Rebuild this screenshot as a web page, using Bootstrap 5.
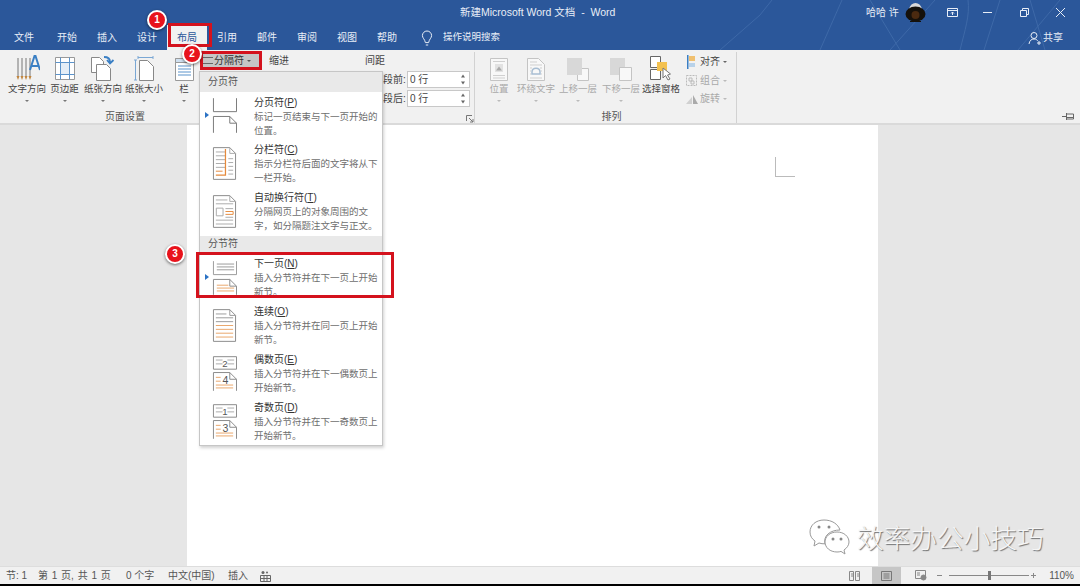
<!DOCTYPE html>
<html>
<head>
    <meta charset="utf-8">
    <title>新建Microsoft Word 文档 - Word</title>
    <link href="https://cdn.jsdelivr.net/npm/bootstrap@5.3.0/dist/css/bootstrap.min.css" rel="stylesheet">
    <style>
        html, body { height: 586px; overflow: hidden; }
        body { font-family: "Liberation Sans", "Noto Sans CJK SC", sans-serif; font-size: 10px; color: #444; background: #000; }
        .app { width: 1080px; height: 584px; position: relative; overflow: hidden; background: #e6e6e6; }

        /* title bar + tabs */
        .word-head { background: #2b579a; height: 50px; color: #e8eef7; position: relative; }
        .head-lines { position: absolute; left: 700px; top: 0; }
        .title-row { height: 25px; line-height: 25px; position: relative; }
        .doc-title { margin-left: 460px; width: 406px; font-size: 10.5px; flex: none; }
        .user-name { width: 39px; flex: none; }
        .avatar { margin-right: 21px; flex: none; }
        .win-btn { margin-right: 25px; flex: none; }
        .tab-row { height: 25px; position: relative; }
        .tab-link { width: 40px; height: 25px; padding: 0; text-align: center; line-height: 26px; color: #e8eef7; font-size: 10px; }
        .tab-link.first { width: 46px; margin-left: 1px; }
        .tab-link.on, .tab-link.on:hover { background: #f1f1f1; color: #2b579a; }
        .tell-me { margin-left: 14px; gap: 10px; font-size: 9.5px; }
        .share { margin-left: auto; margin-right: 17px; gap: 2px; }

        /* ribbon */
        .ribbon { height: 75px; background: #f1f1f1; border-bottom: 2px solid #dadada; position: relative; }
        .rib-group { position: relative; height: 71px; margin-top: 2px; border-right: 1px solid #d2d2d2; }
        .group-one { width: 475px; }
        .group-two { width: 262px; padding-left: 12px; }
        .rib-tools { height: 58px; }
        .rib-label { line-height: 14px; text-align: center; color: #555; }
        .group-one .rib-label { width: 250px; }
        .big-btn { display: flex; flex-direction: column; align-items: center; flex: none; font-size: 9.5px; line-height: 13px; color: #444; white-space: nowrap; }
        .big-btn svg { display: block; margin: 3px 0 1px; }
        .big-btn i { display: block; width: 0; height: 0; margin-top: 5px; border: 2px solid transparent; border-top-color: #777; }
        .big-btn.off { color: #a9a9a9; }
        .big-btn.off i { border-top-color: #bbb; }
        .w-text { width: 38px; margin-left: 0; }
        .w-margin { width: 37px; }
        .w-orient { width: 40px; }
        .w-size { width: 42px; }
        .w-cols { width: 20px; margin-left: 9px; }
        .w-pos { width: 24px; }
        .w-wrap { width: 50px; }
        .w-up { width: 34px; }
        .w-down { width: 52px; }
        .w-pane { width: 28px; }
        .break-btn { width: 59px; height: 15px; margin: 1px 0 0 7px; padding-left: 2px; gap: 1px; background: #c6c6c6; line-height: 15px; color: #333; flex: none; }
        .break-btn i { display: inline-block; width: 0; height: 0; margin: 7px 0 0 2px; border: 2px solid transparent; border-top-color: #555; }
        .para-head { line-height: 14px; margin-top: 2px; color: #444; }
        .indent-col { margin-left: 9px; width: 20px; flex: none; }
        .spacing-col { margin-left: 76px; width: 105px; flex: none; }
        .spin-row { height: 17px; margin-bottom: 2px; }
        .spin-row.top-row { margin-top: 3px; }
        .para-name { width: 42px; padding-left: 18px; line-height: 14px; white-space: nowrap; }
        .spin { flex: 1; position: relative; height: 17px; background: #fff; border: 1px solid #c8c8c8; line-height: 15px; padding-left: 2px; color: #444; }
        .spin svg { position: absolute; right: 3px; top: 1px; }
        .launcher { position: absolute; left: 466px; top: 63px; }
        .side-btns { margin-left: 10px; gap: 4.5px; line-height: 14px; padding-top: 3px; }
        .side-btns > div { height: 14px; gap: 2px; white-space: nowrap; }
        .side-btns .off { color: #a9a9a9; }
        .side-btns i { display: inline-block; margin: 2px 0 0 1px; border: 2px solid transparent; border-top-color: #666; }
        .side-btns .off i { border-top-color: #bbb; }
        .pin { position: absolute; left: 1062px; top: 62px; }

        /* document */
        .doc-area { height: 441px; padding-left: 187px; padding-right: 202px; }
        .doc-page { width: 691px; height: 441px; background: #fff; position: relative; }
        .margin-mark { position: absolute; left: 588px; top: 32px; width: 20px; height: 20px; border-left: 1px solid #bbb; border-bottom: 1px solid #bbb; }

        /* status bar */
        .status-bar { height: 18px; background: #f1f1f1; border-top: 1px solid #ddd; line-height: 17px; color: #555; white-space: nowrap; }
        .st-sec { margin-left: 6px; width: 32px; }
        .st-page { width: 88px; word-spacing: 1px; }
        .st-words { width: 42px; }
        .st-lang { width: 60px; }
        .st-ins { width: 32px; }
        .st-view { width: 29px; height: 17px; }
        .st-view.on { background: #c6c6c6; }
        .st-view.read { padding-right: 6px; }
        .st-view.web { margin-left: 5px; }
        .st-zoom { margin-left: 2px; }
        .st-pct { margin: 0 6px 0 12px; }

        /* dropdown */
        .break-menu { position: absolute; left: 199px; top: 71px; width: 184px; height: 375px; background: #fff; border: 1px solid #c6c6c6; box-shadow: 1px 2px 3px rgba(0,0,0,.18); border-radius: 0; z-index: 5; }
        .menu-head { flex: none; height: 20px; line-height: 20px; background: #e9e9e9; padding: 0 0 0 8px; border: 0; color: #555; border-radius: 0; }
        .menu-head.next { height: 18px; line-height: 15px; }
        .menu-row { flex: none; height: 48px; padding: 2px 0 0 0; border: 0; border-radius: 0; background: transparent; color: #6e6e6e; font-size: 9.5px; }
        .menu-ico { width: 54px; flex: none; position: relative; padding: 4px 0 0 12px; }
        .menu-ico svg { display: block; }
        .menu-ico b { position: absolute; left: 5px; top: 18px; width: 0; height: 0; border: 3px solid transparent; border-left: 4px solid #2b72c4; border-right: 0; }
        .menu-txt { line-height: 14px; }
        .menu-txt strong { display: block; font-size: 10px; font-weight: 400; color: #333; line-height: 15px; }
        .menu-row.first-row .menu-txt { padding-top: 1px; }
        .menu-txt u { text-underline-offset: 1px; }

        /* red annotations */
        .mark-box { position: absolute; border: 3px solid #d4121d; z-index: 7; }
        .box-tab { left: 168px; top: 23px; width: 44px; height: 24px; }
        .box-break { left: 200px; top: 51px; width: 62px; height: 19px; }
        .box-next { left: 196px; top: 252px; width: 198px; height: 46px; }
        .step-dot { position: absolute; width: 20px; height: 20px; border-radius: 50%; background: #e8131c; border: 2px solid #fff; box-shadow: 0 1px 3px rgba(0,0,0,.55); color: #fff; font: 700 10px/16px "Liberation Sans", sans-serif; text-align: center; z-index: 8; }
        .dot-one { left: 147px; top: 10px; }
        .dot-two { left: 182px; top: 44px; }
        .dot-three { left: 165px; top: 244px; }

        /* watermark */
        .water { position: absolute; left: 808px; top: 518px; z-index: 9; gap: 5px; }
        .water-txt { font-family: "Noto Sans CJK SC", sans-serif; font-size: 26.7px; font-weight: 300; line-height: 36px; color: #f6f6f6; text-shadow: 1px 1px 1px #6f6f6f; white-space: nowrap; }
    </style>
</head>
<body>
<div class="app">
    <header class="word-head">
        <svg class="head-lines" width="380" height="50" fill="none" stroke="#3e69a8" stroke-width="1">
            <path d="M20 50L60 15 72 0M120 50l22-50M170 0l30 50M190 50l45-50M260 50c5-20 10-35 8-50M300 0l-16 50M318 50L360 0M345 50l-15-50"/>
        </svg>
        <div class="title-row d-flex align-items-center">
            <div class="doc-title">新建Microsoft Word 文档 &nbsp;-&nbsp; Word</div>
            <div class="user-name">哈哈 许</div>
            <svg class="avatar" width="21" height="21" viewBox="0 0 21 21"><path d="M4 7c1-4 3.500-6 6.500-6s5.500 2 6.500 6z" fill="#d9d9d9"/><ellipse cx="10.500" cy="12" rx="10" ry="7.500" fill="#15110b"/><circle cx="10.500" cy="13" r="4" fill="#4a2a10"/><path d="M5 19.500h11" stroke="#15110b"/></svg>
            <svg class="win-btn" width="11" height="11" fill="none" stroke="#e8eef7"><path d="M.5 1.500h10v8H.5zM.5 3.500h10M5.500 8V5M4 6.500l1.500-1.500L7 6.500"/></svg>
            <svg class="win-btn" width="11" height="11" fill="none" stroke="#e8eef7"><path d="M0 5.500h9"/></svg>
            <svg class="win-btn" width="11" height="11" fill="none" stroke="#e8eef7"><path d="M1.500 3.500h6v6h-6zM3.500 3.500v-2h6v6h-2"/></svg>
            <svg class="win-btn" width="11" height="11" fill="none" stroke="#e8eef7"><path d="M1 1l9 9M10 1l-9 9"/></svg>
        </div>
        <div class="tab-row d-flex align-items-center">
            <nav class="nav flex-nowrap">
                <a class="nav-link tab-link first" href="#">文件</a>
                <a class="nav-link tab-link" href="#">开始</a>
                <a class="nav-link tab-link" href="#">插入</a>
                <a class="nav-link tab-link" href="#">设计</a>
                <a class="nav-link tab-link on" href="#">布局</a>
                <a class="nav-link tab-link" href="#">引用</a>
                <a class="nav-link tab-link" href="#">邮件</a>
                <a class="nav-link tab-link" href="#">审阅</a>
                <a class="nav-link tab-link" href="#">视图</a>
                <a class="nav-link tab-link" href="#">帮助</a>
            </nav>
            <div class="tell-me d-flex align-items-center">
                <svg width="12" height="16" fill="none" stroke="#e8eef7"><path d="M6 1a4.600 4.600 0 0 0-4.600 4.600c0 2.400 2.400 3.600 3 7h3.200c.6-3.400 3-4.600 3-7A4.600 4.600 0 0 0 6 1zM4.800 15h2.400"/></svg>
                <span>操作说明搜索</span>
            </div>
            <div class="share d-flex align-items-center">
                <svg width="13" height="14" fill="none" stroke="#e8eef7"><circle cx="6" cy="4.500" r="3"/><path d="M1 13c.5-3.500 2.500-5 5-5s3 .8 3.600 2M9 12h4M11 10v4"/></svg>
                <span>共享</span>
            </div>
        </div>
    </header>

    <section class="ribbon d-flex">
        <div class="rib-group group-one">
            <div class="rib-tools d-flex ps-2">
                <div class="big-btn w-text">
                    <svg width="26" height="26" viewBox="0 0 26 26" fill="none"><path d="M4 3v19M8 3v19M12 3v19M16 3v19" stroke="#777"/><path d="M2.500 21L4 25l1.500-4M6.500 21L8 25l1.500-4M10.500 21l1.500 4 1.500-4M14.500 21l1.500 4 1.500-4" fill="#c0853f"/><path d="M16 15l4.500-14h1L26 15M17.500 11h7" stroke="#3a7fc4" stroke-width="2"/></svg>
                    文字方向<i></i>
                </div>
                <div class="big-btn w-margin">
                    <svg width="20" height="26" viewBox="0 0 20 26" fill="none"><path d="M.5 2.500h19v22H.5z" stroke="#999" fill="#fff"/><path d="M5.500 2.500v22M14.500 2.500v22M.5 7.500h19M.5 19.500h19" stroke="#5b93cb"/><path d="M6 8h8v11H6z" fill="#e4edf6"/></svg>
                    页边距<i></i>
                </div>
                <div class="big-btn w-orient">
                    <svg width="24" height="26" viewBox="0 0 24 26" fill="none"><path d="M.5 2.500h8l4 4v11H.5z" stroke="#888" fill="#fff"/><path d="M5.500 9.500h10l4 4v12h-14z" stroke="#888" fill="#fff"/><path d="M13 2c3.500 0 6 1.500 6 5M16 5l3 3.500L22.500 5" stroke="#3a7fc4" stroke-width="1.800"/></svg>
                    纸张方向<i></i>
                </div>
                <div class="big-btn w-size">
                    <svg width="20" height="26" viewBox="0 0 20 26" fill="none"><path d="M5.500 5.500h8l6 6v14h-14z" stroke="#888" fill="#fff"/><path d="M1.500 5v20M0 5h3M0 25h3M4 2.500h15M4 1v3M19 1v3" stroke="#7aa7d4"/></svg>
                    纸张大小<i></i>
                </div>
                <div class="big-btn w-cols">
                    <svg width="19" height="26" viewBox="0 0 19 26" fill="none"><path d="M.5 3.500h18v22H.5z" stroke="#999" fill="#fff"/><path d="M.5 3.500h18v4H.5z" fill="#cfe0f0" stroke="#999"/><path d="M3 11h13M3 14h13M3 17h13M3 20h13" stroke="#5b93cb"/></svg>
                    栏<i></i>
                </div>
                <div class="break-btn d-flex"><svg width="10" height="15" fill="none" stroke="#666"><path d="M0 4.500h10M0 10.500h10"/></svg><span>分隔符</span><i></i></div>
                <div class="para-head indent-col">缩进</div>
                <div class="spacing-col">
                    <div class="para-head">间距</div>
                    <div class="spin-row top-row d-flex align-items-center">
                        <div class="para-name">段前:</div>
                        <div class="spin">0 行<svg width="6" height="13"><path d="M3 1.500L1 4.500h4zM3 11.500L1 8.500h4z" fill="#666"/></svg></div>
                    </div>
                    <div class="spin-row d-flex align-items-center">
                        <div class="para-name">段后:</div>
                        <div class="spin">0 行<svg width="6" height="13"><path d="M3 1.500L1 4.500h4zM3 11.500L1 8.500h4z" fill="#666"/></svg></div>
                    </div>
                </div>
            </div>
            <div class="rib-label">页面设置</div>
            <svg class="launcher" width="8" height="8" fill="none" stroke="#777"><path d="M.5 6V.5H6M3 3l4 4M7 4v3H4"/></svg>
        </div>
        <div class="rib-group group-two">
            <div class="rib-tools d-flex">
                <div class="big-btn off w-pos">
                    <svg width="18" height="26" viewBox="0 0 18 26" fill="none"><path d="M.5 3.500h17v22H.5z" stroke="#c4c4c4" fill="#f8f8f8"/><path d="M3 6.500h12M3 23h12M3 20.500h12" stroke="#d0d0d0"/><path d="M5 9h8v8H5z" fill="#e2e2e2"/><path d="M6 15.500l3-4 3 4z" fill="#aaa"/></svg>
                    位置<i></i>
                </div>
                <div class="big-btn off w-wrap">
                    <svg width="18" height="26" viewBox="0 0 18 26" fill="none"><path d="M.5 3.500h11l6 6v16H.5z" stroke="#c4c4c4" fill="#f8f8f8"/><path d="M3 7h7M3 10h12M3 13h2M13 13h2M3 16h1M14 16h1M3 19h1M14 19h1M3 23h12" stroke="#cfcfcf"/><path d="M5 19v-2c0-5 8-5 8 0v2z" stroke="#a8bdd2" stroke-width="1.500"/></svg>
                    环绕文字<i></i>
                </div>
                <div class="big-btn off w-up">
                    <svg width="22" height="26" viewBox="0 0 22 26" fill="none"><path d="M10.500 13.500h11v12h-11z" stroke="#c4c4c4" fill="#f8f8f8"/><path d="M0 3h15v17H0z" fill="#d8d8d8"/></svg>
                    上移一层<i></i>
                </div>
                <div class="big-btn off w-down">
                    <svg width="22" height="26" viewBox="0 0 22 26" fill="none"><path d="M0 3h15v17H0z" fill="#d8d8d8"/><path d="M9.500 12.500h12v13h-12z" stroke="#c4c4c4" fill="#f8f8f8"/></svg>
                    下移一层<i></i>
                </div>
                <div class="big-btn w-pane">
                    <svg width="24" height="26" viewBox="0 0 24 26" fill="none"><path d="M1.500 1.500h10v11h-10zM1.500 14.500h10v10h-10z" stroke="#666" fill="#fff"/><path d="M8 7h10v9H8z" fill="#f3c14f"/><path d="M14 13l0 10 2.500-2.500 2.500 4.500 2-1-2.500-4 3-1z" fill="#fff" stroke="#777"/></svg>
                    选择窗格
                </div>
                <div class="side-btns d-flex flex-column">
                    <div class="d-flex align-items-center"><svg width="13" height="14"><path d="M2 0h1.500v14H2z" fill="#3a7fc4"/><path d="M4 1h6v5H4z" fill="#f0c070"/><path d="M4 8h6v4H4z" fill="#b8d2ea"/></svg>对齐<i></i></div>
                    <div class="d-flex align-items-center off"><svg width="13" height="14" fill="none" stroke="#bbb"><path d="M1.500 1.500h10v10h-10z" stroke-dasharray="2 1"/><path d="M4 4h3v3H4zM6 7h3v3H6z"/></svg>组合<i></i></div>
                    <div class="d-flex align-items-center off"><svg width="13" height="14"><path d="M1 12l6-7v7z" fill="#d0d0d0"/><path d="M8 12V3l5 9z" fill="#aaa"/></svg>旋转<i></i></div>
                </div>
            </div>
            <div class="rib-label">排列</div>
        </div>
        <svg class="pin" width="13" height="9" fill="none" stroke="#666"><path d="M0 4.500h4M4.500 1v7M4.500 2h7v5h-7M4.500 5.500h7"/></svg>
    </section>

    <main class="doc-area d-flex">
        <div class="doc-page"><div class="margin-mark"></div></div>
    </main>

    <footer class="status-bar d-flex align-items-center">
        <span class="st-sec">节: 1</span>
        <span class="st-page">第 1 页, 共 1 页</span>
        <span class="st-words">0 个字</span>
        <span class="st-lang">中文(中国)</span>
        <span class="st-ins">插入</span>
        <svg width="11" height="12" fill="none" stroke="#666"><path d="M.5 5.500h10v6H.5zM4 5.500v6M7 5.500v6M.5 8.500h10"/><circle cx="3" cy="2.500" r="1.500" fill="#666" stroke="none"/><circle cx="7" cy="2.500" r="1" fill="#666" stroke="none"/></svg>
        <div class="ms-auto d-flex align-items-center">
            <div class="st-view read d-flex align-items-center justify-content-center"><svg width="11" height="10" fill="none" stroke="#888"><path d="M.5.500h4v9h-4zM6.500.500h4v9h-4zM2 3h2M2 5h2M8 3h2M8 5h2"/></svg></div>
            <div class="st-view on d-flex align-items-center justify-content-center"><svg width="11" height="10" fill="none" stroke="#777"><path d="M.5.500h10v9H.5zM2.500 3h6M2.500 5h6M2.500 7h6"/></svg></div>
            <div class="st-view web d-flex align-items-center justify-content-center"><svg width="12" height="11" fill="none" stroke="#888"><path d="M.5.500h10v8H.5zM2 3h3M2 5h3"/><circle cx="8.500" cy="7.500" r="2.500" fill="#888"/></svg></div>
            <svg class="st-zoom" width="100" height="11" fill="none"><path d="M0 5.500h5M12 5.500h80M94 5.500h5M96.500 3v5" stroke="#888"/><path d="M51 1h3v9h-3z" fill="#777"/></svg>
            <span class="st-pct">110%</span>
        </div>
    </footer>

    <div class="break-menu list-group">
        <div class="list-group-item menu-head">分页符</div>
        <div class="list-group-item menu-row first-row d-flex">
            <div class="menu-ico"><b></b>
                <svg width="25" height="35" viewBox="0 0 26 36" fill="none" stroke="#777"><path d="M1.500 0v14h24V0M1.500 36V19h17l7 7v10M18.500 19v7h7"/></svg>
            </div>
            <div class="menu-txt"><strong>分页符(<u>P</u>)</strong>标记一页结束与下一页开始的位置。</div>
        </div>
        <div class="list-group-item menu-row d-flex">
            <div class="menu-ico">
                <svg width="25" height="35" viewBox="0 0 26 36" fill="none" stroke="#888"><path d="M1.500 1.500h17l6 6v27h-23z"/><path d="M18.500 1.500v6h6M4 6h10M4 10h10M4 14h10M4 18h10M4 22h10M17 13h5M17 17h5M17 21h5M17 25h5M17 29h5" stroke="#aaa"/><path d="M14 3v27H4" stroke="#e58a3c" stroke-width="1.300"/><path d="M4 26h7" stroke="#e58a3c"/></svg>
            </div>
            <div class="menu-txt"><strong>分栏符(<u>C</u>)</strong>指示分栏符后面的文字将从下一栏开始。</div>
        </div>
        <div class="list-group-item menu-row d-flex">
            <div class="menu-ico">
                <svg width="25" height="35" viewBox="0 0 26 36" fill="none" stroke="#888"><path d="M1.500 1.500h17l6 6v27h-23z"/><path d="M18.500 1.500v6h6M4 6h12M4 10h18M4 27h18M4 31h18M14 15h8M14 24h8" stroke="#aaa"/><path d="M4.500 14.500h7v8h-7z" stroke="#aaa"/><path d="M14 18h8v3h-8" stroke="#e58a3c"/></svg>
            </div>
            <div class="menu-txt"><strong>自动换行符(<u>T</u>)</strong>分隔网页上的对象周围的文<br>字，如分隔题注文字与正文。</div>
        </div>
        <div class="list-group-item menu-head next">分节符</div>
        <div class="list-group-item menu-row d-flex">
            <div class="menu-ico"><b></b>
                <svg width="25" height="35" viewBox="0 0 26 36" fill="none" stroke="#888"><path d="M1.500 1v14h24V1M5 4h18M5 7h18M5 10h18" stroke="#999"/><path d="M1.500 36V20h17l7 7v9M18.500 20v7h7"/><path d="M5 26h12M5 29h18M5 32h18" stroke="#e9a468"/></svg>
            </div>
            <div class="menu-txt"><strong>下一页(<u>N</u>)</strong>插入分节符并在下一页上开始新节。</div>
        </div>
        <div class="list-group-item menu-row d-flex">
            <div class="menu-ico">
                <svg width="25" height="35" viewBox="0 0 26 36" fill="none" stroke="#888"><path d="M1.500 1.500h17l6 6v27h-23z"/><path d="M18.500 1.500v6h6M4 6h11M4 10h18M4 14h18" stroke="#999"/><path d="M4 18h18M4 22h18M4 26h18M4 30h18" stroke="#e9a468"/></svg>
            </div>
            <div class="menu-txt"><strong>连续(<u>O</u>)</strong>插入分节符并在同一页上开始新节。</div>
        </div>
        <div class="list-group-item menu-row d-flex">
            <div class="menu-ico">
                <svg width="25" height="35" viewBox="0 0 26 36" fill="none" stroke="#888"><path d="M1.500 0.500h24v13h-24z"/><path d="M4 4h7M16 4h7M4 8h7M16 8h7" stroke="#aaa"/><text x="13.500" y="11" font-size="10" font-family="Liberation Sans" text-anchor="middle" fill="#555" stroke="none">2</text><path d="M1.500 36V17h17l7 7v12M18.500 17v7h7"/><path d="M4 22h5M4 26h5M4 30h18M4 33h18" stroke="#e9a468"/><text x="14" y="29" font-size="11" font-family="Liberation Sans" text-anchor="middle" fill="#555" stroke="none">4</text></svg>
            </div>
            <div class="menu-txt"><strong>偶数页(<u>E</u>)</strong>插入分节符并在下一偶数页上开始新节。</div>
        </div>
        <div class="list-group-item menu-row d-flex">
            <div class="menu-ico">
                <svg width="25" height="35" viewBox="0 0 26 36" fill="none" stroke="#888"><path d="M1.500 0.500h24v13h-24z"/><path d="M4 4h7M16 4h7M4 8h7M16 8h7" stroke="#aaa"/><text x="13.500" y="11" font-size="10" font-family="Liberation Sans" text-anchor="middle" fill="#555" stroke="none">1</text><path d="M1.500 36V17h17l7 7v12M18.500 17v7h7"/><path d="M4 22h5M4 26h5M4 30h18M4 33h18" stroke="#e9a468"/><text x="14" y="29" font-size="11" font-family="Liberation Sans" text-anchor="middle" fill="#555" stroke="none">3</text></svg>
            </div>
            <div class="menu-txt"><strong>奇数页(<u>D</u>)</strong>插入分节符并在下一奇数页上开始新节。</div>
        </div>
    </div>

    <div class="mark-box box-tab"></div>
    <div class="mark-box box-break"></div>
    <div class="mark-box box-next"></div>
    <div class="step-dot dot-one">1</div>
    <div class="step-dot dot-two">2</div>
    <div class="step-dot dot-three">3</div>

    <div class="water d-flex align-items-center">
        <svg width="44" height="38" viewBox="0 0 44 38" fill="#fff" stroke="#9a9a9a"><path d="M16 2C8 2 2 7 2 14c0 4 2 7 5 9l-1 5 5-3c2 .6 4 1 6 .8C15 18 22 12 32 12 30 6 24 2 16 2z"/><path d="M29 14c-7 0-12 4.500-12 10s5 10 12 10c1.500 0 3-.2 4-.6l4 2.600-1-4c3-2 5-5 5-8 0-5.500-5-10-12-10z"/><circle cx="11" cy="9" r="1.500" fill="#888" stroke="none"/><circle cx="21" cy="9" r="1.500" fill="#888" stroke="none"/><circle cx="25" cy="21" r="1.500" fill="#888" stroke="none"/><circle cx="33" cy="21" r="1.500" fill="#888" stroke="none"/></svg>
        <div class="water-txt">效率办公小技巧</div>
    </div>
</div>
<script src="https://cdn.jsdelivr.net/npm/bootstrap@5.3.0/dist/js/bootstrap.bundle.min.js"></script>
</body>
</html>
